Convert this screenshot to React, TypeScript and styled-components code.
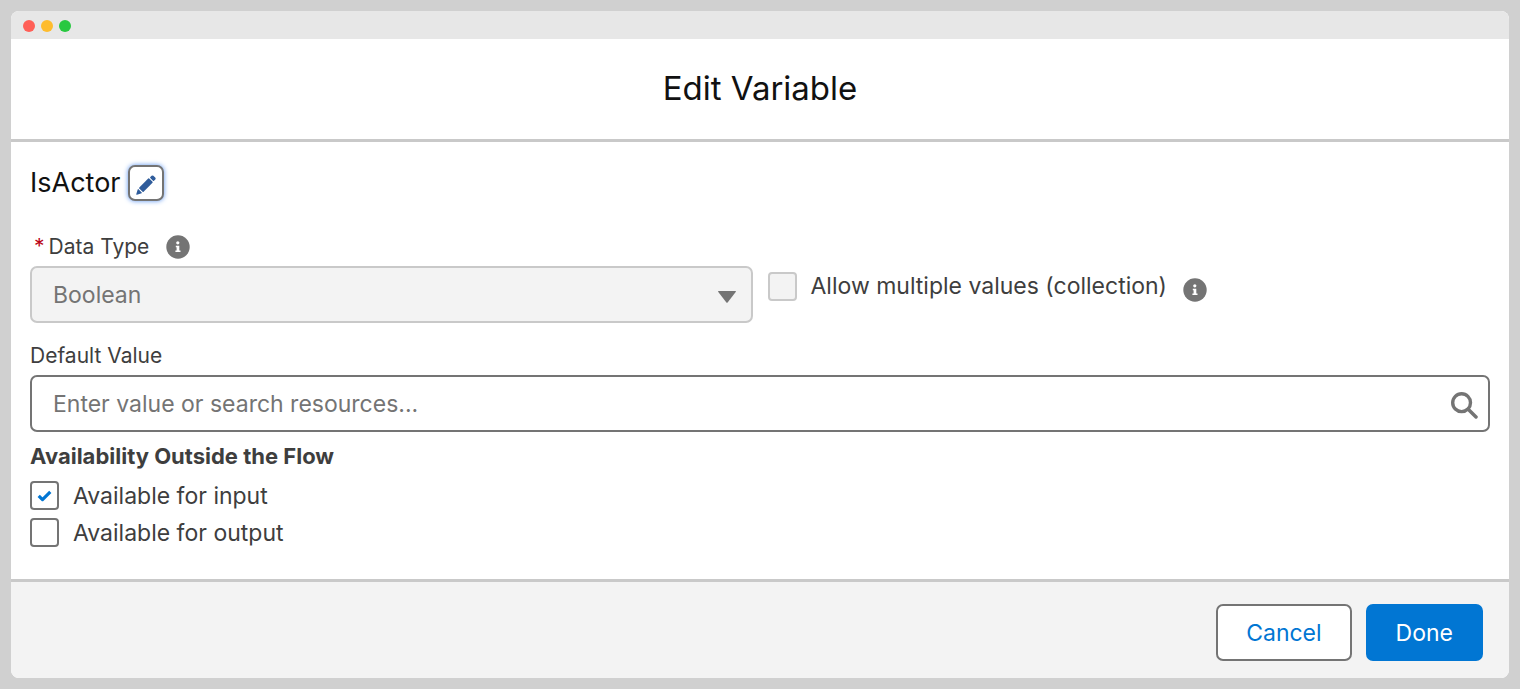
import React, { useState } from 'react';
import styled, { createGlobalStyle } from 'styled-components';

const GlobalStyle = createGlobalStyle`
  *, *::before, *::after { box-sizing: border-box; }
  body {
    margin: 0;
    background: #d0d0d0;
    color: #3e3e3e;
    font-family: Inter, "Liberation Sans", sans-serif;
    font-size: 23px;
    line-height: 28px;
  }
  button, input, select { font: inherit; }
`;

const Page = styled.div`
  display: flex;
  min-height: 100vh;
  padding: 11px;
`;

const Dialog = styled.main`
  display: flex;
  flex: 1;
  flex-direction: column;
  min-width: 0;
  overflow: hidden;
  border-radius: 8px;
  background: #fff;
`;

const TitleBar = styled.div`
  display: flex;
  align-items: center;
  gap: 6px;
  height: 28px;
  padding: 2px 12px 0;
  background: #e7e7e7;
`;

const Light = styled.span<{ $color: string }>`
  width: 12px;
  height: 12px;
  border-radius: 50%;
  background: ${({ $color }) => $color};
`;

const Header = styled.header`
  display: flex;
  align-items: center;
  justify-content: center;
  height: 103px;
  padding-bottom: 2px;
  border-bottom: 3px solid #c9c9c9;
`;

const Title = styled.h1`
  margin: 0;
  color: #111;
  font-size: 33px;
  font-weight: 400;
  line-height: 44px;
`;

const Body = styled.form`
  display: flex;
  flex: 1;
  flex-direction: column;
  padding: 23px 19px 32px;
`;

const NameRow = styled.div`
  display: flex;
  align-items: center;
  gap: 8px;
  margin-bottom: 32px;
`;

const VariableName = styled.h2`
  margin: 0;
  color: #111;
  font-size: 27px;
  font-weight: 400;
  line-height: 36px;
`;

const EditButton = styled.button`
  display: grid;
  place-items: center;
  width: 36px;
  height: 36px;
  padding: 4px 0 0;
  border: 2px solid #747474;
  border-radius: 7px;
  background: #fff;
  box-shadow: 0 0 5px #5b94f0;
`;

const TypeRow = styled.div`
  display: grid;
  grid-template-columns: minmax(0, 723fr) minmax(0, 738fr);
  align-items: end;
  margin-bottom: 19px;
`;

const Field = styled.div`
  display: flex;
  flex-direction: column;
  gap: 5px;
`;

const LabelRow = styled.div<{ $inset?: boolean }>`
  display: flex;
  align-items: center;
  gap: 17px;
  padding-left: ${({ $inset }) => ($inset ? 4 : 0)}px;
`;

const Label = styled.label`
  font-size: 21px;
`;

const Required = styled.abbr`
  margin-right: 4px;
  color: #ba0517;
  text-decoration: none;
`;

const ControlFrame = styled.div`
  display: grid;
  align-items: center;

  > * { grid-area: 1 / 1; }
`;

const control = `
  width: 100%;
  height: 57px;
  margin: 0;
  border-radius: 7px;
  outline: none;
  appearance: none;
`;

const Select = styled.select`
  ${control}
  padding: 0 60px 0 21px;
  border: 2px solid #c9c9c9;
  background: #f3f3f3;
  color: #747474;
  opacity: 1;
`;

const Input = styled.input`
  ${control}
  padding: 0 50px 0 21px;
  border: 2px solid #747474;
  background: #fff;
  color: #3e3e3e;

  &::placeholder { color: #747474; opacity: 1; }
`;

const ControlIcon = styled.span<{ $right: number }>`
  display: flex;
  justify-self: end;
  margin-right: ${({ $right }) => $right}px;
  padding-top: 4px;
  pointer-events: none;
`;

const CollectionOption = styled.div`
  display: flex;
  align-items: center;
  align-self: start;
  gap: 16px;
  padding: 37px 0 0 15px;
`;

const CheckLabel = styled.label`
  display: flex;
  align-items: center;
  gap: 14px;
`;

const CheckFrame = styled.span`
  display: grid;
  flex: none;
  place-items: center;

  > * { grid-area: 1 / 1; }
  > svg { pointer-events: none; }
`;

const Checkbox = styled.input`
  width: 29px;
  height: 29px;
  margin: 0;
  border: 2px solid #747474;
  border-radius: 4px;
  background: #fff;
  appearance: none;

  &:disabled {
    border-color: #c9c9c9;
    background: #f3f3f3;
  }
`;

const InfoButton = styled.button<{ $lowered?: boolean }>`
  display: flex;
  padding: ${({ $lowered }) => ($lowered ? 8 : 0)}px 0 0;
  border: 0;
  background: none;
`;

const Availability = styled.fieldset`
  display: flex;
  flex-direction: column;
  gap: 8px;
  min-width: 0;
  margin: 10px 0 0;
  padding: 0;
  border: 0;
`;

const Legend = styled.legend`
  margin-bottom: 11px;
  padding: 0;
  font-size: 22px;
  font-weight: 700;
`;

const Footer = styled.footer`
  display: flex;
  justify-content: flex-end;
  gap: 14px;
  padding: 22px 26px 17px;
  border-top: 3px solid #c9c9c9;
  background: #f3f3f3;
`;

const ActionButton = styled.button<{ $primary?: boolean }>`
  height: 57px;
  padding: 0 28px;
  border: 2px solid ${({ $primary }) => ($primary ? '#0176d3' : '#747474')};
  border-radius: 7px;
  background: ${({ $primary }) => ($primary ? '#0176d3' : '#fff')};
  color: ${({ $primary }) => ($primary ? '#fff' : '#0176d3')};
`;

const PencilIcon = () => (
  <svg width="20" height="20" viewBox="0 0 20 20" fill="#2f5c9b" aria-hidden="true">
    <path d="M12.2 3.5q.5-.4 1 0l3.3 3.3q.4.5 0 1L7.6 16.7q-.5.4-1 0L3.3 13.4q-.4-.5 0-1Z" />
    <path d="M14.3 2 15.6.8q.9-.8 1.8 0l1.8 1.8q.9.9.1 1.8L18 5.7q-.5.4-1 0L14.3 3q-.4-.5 0-1Z" />
    <path d="M1.7 14.4q.3-.6.8-.1l3.2 3.2q.5.5-.1.8L1 19.7Q0 20 .3 19Z" />
  </svg>
);

const InfoIcon = () => (
  <svg width="24" height="24" viewBox="0 0 24 24" aria-hidden="true">
    <circle cx="12" cy="12" r="11.7" fill="#747474" />
    <circle cx="11.8" cy="7.8" r="1.6" fill="#fff" />
    <path d="M9.8 10.7h3.5v4.8h1.2v1.6H9.4v-1.6h1.2v-3.2h-.8Z" fill="#fff" />
  </svg>
);

const CaretIcon = () => (
  <svg width="18" height="12" viewBox="0 0 18 12" aria-hidden="true">
    <path d="M.5 0h17q.7.2.2 1L9.6 11.4q-.6.7-1.2 0L.3 1Q-.2.2.5 0Z" fill="#747474" />
  </svg>
);

const SearchIcon = () => (
  <svg width="27" height="27" viewBox="0 0 27 27" fill="none" stroke="#747474" aria-hidden="true">
    <circle cx="10.6" cy="10.7" r="8.9" strokeWidth="3.4" />
    <path d="m17.2 17.3 7.8 7.7" strokeWidth="3.5" strokeLinecap="round" />
  </svg>
);

const CheckIcon = () => (
  <svg width="15" height="13" viewBox="0 0 15 13" aria-hidden="true">
    <path d="M1.7 6.9 5.5 10.6 13.3 2.9" fill="none" stroke="#0176d3" strokeWidth="3.2" strokeLinejoin="round" />
  </svg>
);

export default function App() {
  const [value, setValue] = useState('');
  const [forInput, setForInput] = useState(true);
  const [forOutput, setForOutput] = useState(false);

  return (
    <Page>
      <GlobalStyle />
      <Dialog>
        <TitleBar>
          <Light $color="#ff5f57" />
          <Light $color="#febc2e" />
          <Light $color="#28c840" />
        </TitleBar>
        <Header>
          <Title>Edit Variable</Title>
        </Header>
        <Body id="variable-form" onSubmit={(event) => event.preventDefault()}>
          <NameRow>
            <VariableName>IsActor</VariableName>
            <EditButton type="button" aria-label="Edit API name">
              <PencilIcon />
            </EditButton>
          </NameRow>
          <TypeRow>
            <Field>
              <LabelRow $inset>
                <Label htmlFor="data-type">
                  <Required title="required">*</Required>
                  Data Type
                </Label>
                <InfoButton type="button" aria-label="Data type help">
                  <InfoIcon />
                </InfoButton>
              </LabelRow>
              <ControlFrame>
                <Select id="data-type" defaultValue="boolean" disabled>
                  <option value="boolean">Boolean</option>
                </Select>
                <ControlIcon $right={17}>
                  <CaretIcon />
                </ControlIcon>
              </ControlFrame>
            </Field>
            <CollectionOption>
              <CheckLabel>
                <Checkbox type="checkbox" disabled />
                Allow multiple values (collection)
              </CheckLabel>
              <InfoButton type="button" $lowered aria-label="Collection help">
                <InfoIcon />
              </InfoButton>
            </CollectionOption>
          </TypeRow>
          <Field>
            <LabelRow>
              <Label htmlFor="default-value">Default Value</Label>
            </LabelRow>
            <ControlFrame>
              <Input
                id="default-value"
                placeholder="Enter value or search resources..."
                value={value}
                onChange={(event) => setValue(event.target.value)}
              />
              <ControlIcon $right={12}>
                <SearchIcon />
              </ControlIcon>
            </ControlFrame>
          </Field>
          <Availability>
            <Legend>Availability Outside the Flow</Legend>
            <CheckLabel>
              <CheckFrame>
                <Checkbox type="checkbox" checked={forInput} onChange={() => setForInput(!forInput)} />
                {forInput && <CheckIcon />}
              </CheckFrame>
              Available for input
            </CheckLabel>
            <CheckLabel>
              <CheckFrame>
                <Checkbox type="checkbox" checked={forOutput} onChange={() => setForOutput(!forOutput)} />
                {forOutput && <CheckIcon />}
              </CheckFrame>
              Available for output
            </CheckLabel>
          </Availability>
        </Body>
        <Footer>
          <ActionButton type="button">Cancel</ActionButton>
          <ActionButton type="submit" form="variable-form" $primary>
            Done
          </ActionButton>
        </Footer>
      </Dialog>
    </Page>
  );
}
